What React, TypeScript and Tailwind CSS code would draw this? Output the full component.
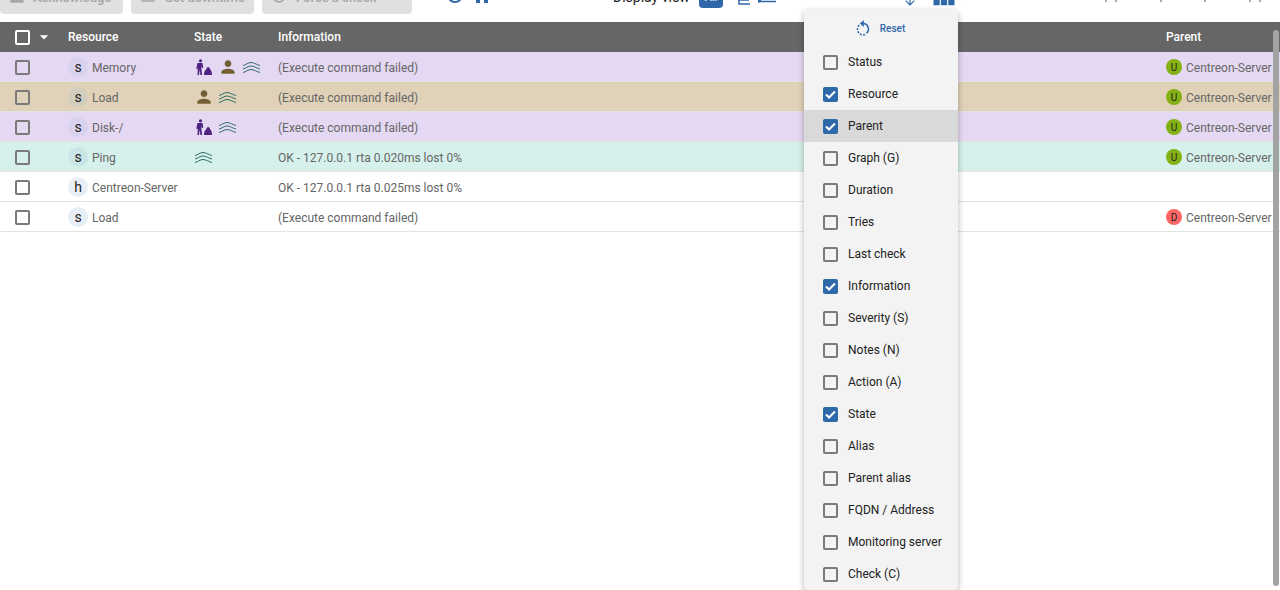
import { MdPerson, MdRefresh, MdPause, MdViewModule, MdArrowDownward, MdArrowDropDown, MdViewHeadline } from "react-icons/md";

const Worker = () => (
  <svg viewBox="0 0 20 20" width="20" height="20" fill="#4f2480">
    <circle cx="6.500" cy="3.800" r="1.600" />
    <path d="M3.500 6h5l.8 4.800-1.300.3-.4-2.300-.3 2.500.8 6.700H6.400L5.700 12.500 5 18H3.500l.3-7.500-.5 1.500-1.100-.3z" />
    <path d="M10 18c0-3 .8-5 2.200-5.600.3-1.500 1-2.400 2-2.400s1.700.9 2 2.400c1.100.6 1.800 2.600 1.800 5.600z" />
  </svg>
);

const Waves = () => (
  <svg viewBox="0 0 19 13" width="19" height="13" fill="none" stroke="#2f6f6a" strokeWidth="1">
    <path d="M1 4.500c3-.6 5-3 8-3s6 2.400 9 3" />
    <path d="M1 8c3-.6 5-3 8-3s6 2.400 9 3" />
    <path d="M1 11.500c3-.6 5-3 8-3s6 2.400 9 3" />
  </svg>
);

const Box = ({ checked, white }: { checked?: boolean; white?: boolean }) =>
  checked ? (
    <span className="flex h-[15px] w-[15px] shrink-0 items-center justify-center rounded-[2px] bg-[#2e68aa]">
      <svg viewBox="0 0 15 15" width="15" height="15" fill="none" stroke="white" strokeWidth="2">
        <path d="M3 7.500l3 3 6-6" />
      </svg>
    </span>
  ) : (
    <span className={`block h-[15px] w-[15px] shrink-0 rounded-[2px] border-2 ${white ? "border-white" : "border-[#7a7a7a]"}`} />
  );

const rows = [
  { bg: "bg-[#e5d8f2]", avatar: "bg-[#d8d2ee]", type: "s", name: "Memory", state: ["worker", "person", "waves"], info: "(Execute command failed)", parent: "U" },
  { bg: "bg-[#e0d2b8]", avatar: "bg-[#d3cdbd]", type: "s", name: "Load", state: ["person", "waves"], info: "(Execute command failed)", parent: "U" },
  { bg: "bg-[#e5d8f2]", avatar: "bg-[#d8d2ee]", type: "s", name: "Disk-/", state: ["worker", "waves"], info: "(Execute command failed)", parent: "U" },
  { bg: "bg-[#d6f1ec]", avatar: "bg-[#c9e5e6]", type: "s", name: "Ping", state: ["waves"], info: "OK - 127.0.0.1 rta 0.020ms lost 0%", parent: "U" },
  { bg: "bg-white", avatar: "bg-[#e8eef6]", type: "h", name: "Centreon-Server", state: [], info: "OK - 127.0.0.1 rta 0.025ms lost 0%", parent: "" },
  { bg: "bg-white", avatar: "bg-[#e8eef6]", type: "s", name: "Load", state: [], info: "(Execute command failed)", parent: "D" },
];

const columns = [
  { label: "Status", on: false },
  { label: "Resource", on: true },
  { label: "Parent", on: true },
  { label: "Graph (G)", on: false },
  { label: "Duration", on: false },
  { label: "Tries", on: false },
  { label: "Last check", on: false },
  { label: "Information", on: true },
  { label: "Severity (S)", on: false },
  { label: "Notes (N)", on: false },
  { label: "Action (A)", on: false },
  { label: "State", on: true },
  { label: "Alias", on: false },
  { label: "Parent alias", on: false },
  { label: "FQDN / Address", on: false },
  { label: "Monitoring server", on: false },
  { label: "Check (C)", on: false },
];

export default function App() {
  return (
    <div className="relative h-[590px] w-[1280px] overflow-hidden bg-white text-[12px]" style={{ fontFamily: "Roboto, sans-serif" }}>
      {/* Toolbar, scrolled mostly out of view */}
      <div className="flex h-[22px] items-end overflow-hidden">
        <div className="mb-2 flex h-9 w-[123px] shrink-0 items-center gap-[6px] rounded bg-[#e0e0e0] pl-[7px] text-[13px] font-medium whitespace-nowrap text-[#a6a6a6]">
          <MdPerson size={20} className="shrink-0" />
          <span className="pt-1">Acknowledge</span>
        </div>
        <div className="mb-2 ml-2 flex h-9 w-[123px] shrink-0 items-center gap-[7px] rounded bg-[#e0e0e0] pl-[7px] text-[13px] font-medium whitespace-nowrap text-[#a6a6a6]">
          <MdViewHeadline size={20} className="shrink-0" />
          <span className="pt-1">Set downtime</span>
        </div>
        <div className="mb-2 ml-2 flex h-9 w-[150px] shrink-0 items-center gap-[7px] rounded bg-[#e0e0e0] pl-[7px] text-[13px] font-medium whitespace-nowrap text-[#a6a6a6]">
          <MdRefresh size={20} className="shrink-0" />
          <span className="pt-1">Force a check</span>
        </div>
        <span className="mb-[15px] ml-[31px] text-[#2e68aa]"><MdRefresh size={24} /></span>
        <span className="mb-[14px] ml-[3px] text-[#2e68aa]"><MdPause size={24} /></span>
        <span className="mb-[17px] ml-[119px] w-[79px] text-[14px] leading-4 whitespace-nowrap text-[#222]">Display view</span>
        <span className="mb-[14px] ml-[7px] flex h-5 w-6 items-center justify-center rounded bg-[#2e68aa] text-[11px] text-white">All</span>
        <svg className="mb-[17px] ml-[15px]" viewBox="0 0 12 8" width="12" height="8" fill="none" stroke="#2e68aa" strokeWidth="1.500">
          <path d="M1 0v7h11M1 3h10" />
        </svg>
        <svg className="mb-[18px] ml-[8px]" viewBox="0 0 18 6" width="18" height="6" fill="none" stroke="#2e68aa" strokeWidth="1.500">
          <path d="M3 3.500h15" />
          <circle cx="1.500" cy="3" r="1" fill="#2e68aa" />
        </svg>
        <span className="mb-[14px] ml-[127px] text-[#2e68aa]"><MdArrowDownward size={14} /></span>
        <span className="mb-[11px] ml-[13px] text-[#2e68aa]"><MdViewModule size={28} /></span>
        {/* Bottoms of the clipped icons on the right */}
        <span className="mb-5 ml-[147px] h-[2px] w-[2px] bg-[#aaaaaa]" />
        <span className="mb-5 ml-2 h-[2px] w-[2px] bg-[#aaaaaa]" />
        <span className="mb-5 ml-[43px] h-[2px] w-[2px] bg-[#aaaaaa]" />
        <span className="mb-5 ml-[42px] h-[2px] w-[2px] bg-[#aaaaaa]" />
        <span className="mb-5 ml-[43px] h-[2px] w-[2px] bg-[#aaaaaa]" />
        <span className="mb-5 ml-2 h-[2px] w-[2px] bg-[#aaaaaa]" />
      </div>

      {/* Table */}
      <div className="flex h-[30px] items-center bg-[#666666] font-medium text-white">
        <div className="flex w-[68px] items-center pl-[15px]">
          <Box white />
          <MdArrowDropDown size={20} className="ml-[4px]" />
        </div>
        <div className="w-[126px]">Resource</div>
        <div className="w-[84px]">State</div>
        <div className="flex-1">Information</div>
        <div className="w-[114px]">Parent</div>
      </div>
      {rows.map((r, i) => (
        <div key={i} className={`flex h-[30px] items-center border-b border-[#e3e3e3] pt-[1px] ${r.bg}`}>
          <div className="w-[68px] pl-[15px]"><Box /></div>
          <div className="flex w-[126px] items-center text-[#666666]">
            <span className={`flex h-5 w-5 items-center justify-center rounded-full text-[14px] text-[#222] ${r.avatar}`}>{r.type}</span>
            <span className="ml-1 pt-[2px]">{r.name}</span>
          </div>
          <div className="flex w-[84px] items-center gap-1">
            {r.state.map((s, j) =>
              s === "worker" ? <Worker key={j} /> : s === "person" ? <MdPerson key={j} size={20} color="#745f35" /> : <Waves key={j} />
            )}
          </div>
          <div className="flex-1 pt-[2px] text-[#666666]">{r.info}</div>
          <div className="flex w-[114px] items-center text-[#666666]">
            {r.parent && (
              <>
                <span className={`flex h-4 w-4 items-center justify-center rounded-full text-[10px] text-[#222] ${r.parent === "U" ? "bg-[#84b113]" : "bg-[#ff6666]"}`}>{r.parent}</span>
                <span className="ml-1 pt-[2px] whitespace-nowrap">Centreon-Server</span>
              </>
            )}
          </div>
        </div>
      ))}

      {/* Scrollbar */}
      <div className="absolute right-[1px] top-[30px] h-[556px] w-[6px] rounded-full bg-[#a3a3a3]" />

      {/* Columns menu */}
      <div className="absolute left-[804px] top-[10px] w-[154px] rounded bg-[#f3f3f3] shadow-[0_2px_6px_rgba(0,0,0,0.3)]">
        <div className="flex h-9 items-center justify-center gap-[9px] pr-[2px] text-[10px] font-medium text-[#2e68aa]">
          <svg viewBox="0 0 16 16" width="16" height="16" fill="none" stroke="#2e68aa" strokeWidth="1.500">
            <path d="M8 3.500a5.500 5.500 0 0 1 3.500 9.700" />
            <path d="M10 14.500a5.500 5.500 0 0 1-7.500-5.500 5.500 5.500 0 0 1 2-4" strokeDasharray="2 1.300" />
            <path d="M8.800 0 4.800 3.500l4 3.500z" fill="#2e68aa" stroke="none" />
          </svg>
          Reset
        </div>
        {columns.map((c) => (
          <div key={c.label} className={`flex h-8 items-center gap-[10px] pl-[19px] text-[#222] ${c.label === "Parent" ? "bg-[#d9d9d9]" : ""}`}>
            <Box checked={c.on} />
            {c.label}
          </div>
        ))}
      </div>
    </div>
  );
}
